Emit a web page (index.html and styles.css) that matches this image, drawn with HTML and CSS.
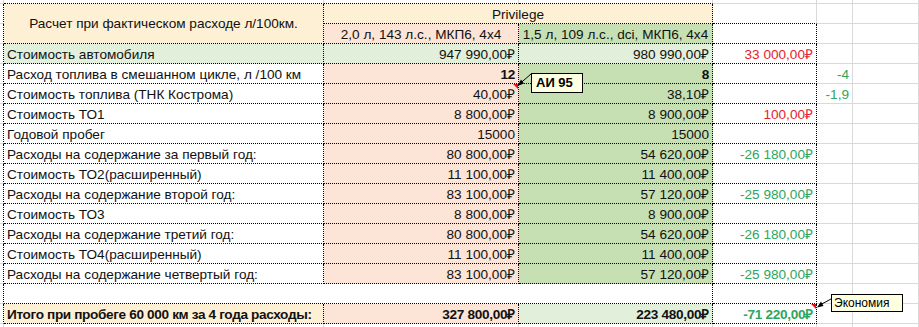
FILE: index.html
```html
<!DOCTYPE html>
<html lang="ru">
<head>
    <meta charset="UTF-8">
    <title>Расчет при фактическом расходе</title>
    <link rel="stylesheet" href="styles.css">
</head>
<body>
    <div class="sheet-wrap">
        <table class="sheet">
            <colgroup>
                <col class="c0"><col class="ca"><col class="cb"><col class="cc"><col class="cd"><col class="ce"><col class="cf">
            </colgroup>
            <tr class="top">
                <td></td><td class="db"></td><td class="db"></td><td class="db"></td><td></td><td></td><td></td>
            </tr>
            <tr>
                <td class="dr s"></td>
                <td class="d cream mid head" rowspan="2">Расчет при фактическом расходе л/100км.</td>
                <td class="d cream mid" colspan="2">Privilege</td>
                <td class="db"></td><td></td><td></td>
            </tr>
            <tr>
                <td class="dr s"></td>
                <td class="d pink mid">2,0 л, 143 л.с., МКП6, 4х4</td>
                <td class="d green mid">1,5 л, 109 л.с., dci, МКП6, 4х4</td>
                <td class="d"></td><td></td><td></td>
            </tr>
            <tr>
                <td class="dr s"></td>
                <td class="d lgreen">Стоимость автомобиля</td>
                <td class="d lgreen num">947 990,00₽</td>
                <td class="d lgreen num">980 990,00₽</td>
                <td class="d num red">33 000,00₽</td><td></td><td></td>
            </tr>
            <tr>
                <td class="dr s"></td>
                <td class="d">Расход топлива в смешанном цикле, л /100 км</td>
                <td class="d pink num b">12</td>
                <td class="d green num b">8</td>
                <td class="d"></td><td class="num grn">-4</td><td></td>
            </tr>
            <tr>
                <td class="dr s"></td>
                <td class="d">Стоимость топлива (ТНК Кострома)</td>
                <td class="d pink num">40,00₽</td>
                <td class="d green num">38,10₽</td>
                <td class="d"></td><td class="num grn">-1,9</td><td></td>
            </tr>
            <tr>
                <td class="dr s"></td>
                <td class="d">Стоимость ТО1</td>
                <td class="d pink num">8 800,00₽</td>
                <td class="d green num">8 900,00₽</td>
                <td class="d num red">100,00₽</td><td></td><td></td>
            </tr>
            <tr>
                <td class="dr s"></td>
                <td class="d">Годовой пробег</td>
                <td class="d pink num">15000</td>
                <td class="d green num">15000</td>
                <td class="d"></td><td></td><td></td>
            </tr>
            <tr>
                <td class="dr s"></td>
                <td class="d">Расходы на содержание за первый год:</td>
                <td class="d pink num">80 800,00₽</td>
                <td class="d green num">54 620,00₽</td>
                <td class="d num grn">-26 180,00₽</td><td></td><td></td>
            </tr>
            <tr>
                <td class="dr s"></td>
                <td class="d">Стоимость ТО2(расширенный)</td>
                <td class="d pink num">11 100,00₽</td>
                <td class="d green num">11 400,00₽</td>
                <td class="d"></td><td></td><td></td>
            </tr>
            <tr>
                <td class="dr s"></td>
                <td class="d">Расходы на содержание второй год:</td>
                <td class="d pink num">83 100,00₽</td>
                <td class="d green num">57 120,00₽</td>
                <td class="d num grn">-25 980,00₽</td><td></td><td></td>
            </tr>
            <tr>
                <td class="dr s"></td>
                <td class="d">Стоимость ТО3</td>
                <td class="d pink num">8 800,00₽</td>
                <td class="d green num">8 900,00₽</td>
                <td class="d"></td><td></td><td></td>
            </tr>
            <tr>
                <td class="dr s"></td>
                <td class="d">Расходы на содержание третий год:</td>
                <td class="d pink num">80 800,00₽</td>
                <td class="d green num">54 620,00₽</td>
                <td class="d num grn">-26 180,00₽</td><td></td><td></td>
            </tr>
            <tr>
                <td class="dr s"></td>
                <td class="d">Стоимость ТО4(расширенный)</td>
                <td class="d pink num">11 100,00₽</td>
                <td class="d green num">11 400,00₽</td>
                <td class="d"></td><td></td><td></td>
            </tr>
            <tr>
                <td class="dr s"></td>
                <td class="d">Расходы на содержание четвертый год:</td>
                <td class="d pink num">83 100,00₽</td>
                <td class="d green num">57 120,00₽</td>
                <td class="d num grn">-25 980,00₽</td><td></td><td></td>
            </tr>
            <tr>
                <td class="dr s"></td>
                <td class="d" colspan="3"></td>
                <td class="d"></td><td></td><td></td>
            </tr>
            <tr>
                <td class="dr s"></td>
                <td class="d cream b total">Итого при пробеге 60 000 км за 4 года расходы:</td>
                <td class="d pink num b">327 800,00₽</td>
                <td class="d lgreen num b">223 480,00₽</td>
                <td class="d num grn b">-71 220,00₽</td><td></td><td></td>
            </tr>
            <tr class="bot">
                <td></td><td></td><td></td><td></td><td></td><td></td><td></td>
            </tr>
        </table>

        <!-- comment on fuel price -->
        <span class="tri tri-fuel"></span>
        <svg class="arrow arrow-fuel" width="16" height="16" viewBox="0 0 16 16">
            <line x1="4" y1="11.5" x2="15" y2="2" stroke="#000" stroke-width="1"/>
            <polygon points="1.5,14 8,11.5 5,7.5" fill="#000"/>
        </svg>
        <div class="note note-fuel">АИ 95</div>

        <!-- comment on total -->
        <span class="tri tri-total"></span>
        <svg class="arrow arrow-total" width="16" height="14" viewBox="0 0 16 14">
            <line x1="4" y1="9" x2="15" y2="3" stroke="#000" stroke-width="1"/>
            <polygon points="1,11.5 7.5,10 5,5.5" fill="#000"/>
        </svg>
        <div class="note note-total">Экономия</div>
    </div>
</body>
</html>
```
FILE: styles.css
```css
body {
    margin: 0;
    background-color: #fff;
    font-family: "Liberation Sans", Arial, sans-serif;
    font-size: 13.6px;
    color: #111;
}
.sheet-wrap {
    position: relative;
    width: 919px;
    height: 327px;
    overflow: hidden;
}
.sheet {
    border-collapse: separate;
    border-spacing: 0;
    table-layout: fixed;
    width: 919px;
}
.c0 { width: 4px; }
.ca { width: 320px; }
.cb { width: 195px; }
.cc { width: 194px; }
.cd { width: 104px; }
.ce { width: 36px; }
.cf { width: 66px; }
.sheet td {
    box-sizing: border-box;
    height: 20px;
    padding: 0 3px;
    border-right: 1px solid #d9d9d9;
    border-bottom: 1px solid #d9d9d9;
    white-space: nowrap;
    overflow: hidden;
    line-height: 17px;
    vertical-align: bottom;
}
.sheet td.s {
    padding: 0;
}
.sheet tr.top td {
    height: 4px;
    padding: 0;
}
.sheet tr.bot td {
    height: 3px;
    padding: 0;
    border-bottom: none;
}
.sheet td.d {
    border-right: 1px dotted #000;
    border-bottom: 1px dotted #000;
}
.sheet td.dr {
    border-right: 1px dotted #000;
}
.sheet td.db {
    border-bottom: 1px dotted #000;
}
.sheet td.head {
    vertical-align: middle;
}
.num { text-align: right; }
.mid { text-align: center; }
.b {
    font-weight: bold;
    letter-spacing: -0.3px;
}
.sheet td.total {
    letter-spacing: -0.35px;
}
.cream { background-color: #fdf0d5; }
.pink { background-color: #fce4d6; }
.green { background-color: #c6e0b4; }
.lgreen { background-color: #e2efda; }
.red { color: #e5232d; }
.grn { color: #2ea55d; }

/* comments */
.tri {
    position: absolute;
    width: 0;
    height: 0;
    border-top: 5px solid #e0121c;
    border-left: 5px solid transparent;
}
.tri-fuel { left: 513px; top: 84px; }
.tri-total { left: 811px; top: 304px; }
.arrow {
    position: absolute;
}
.arrow-fuel { left: 516px; top: 72px; }
.arrow-total { left: 816px; top: 296px; }
.note {
    position: absolute;
    box-sizing: border-box;
    background-color: #ffffe1;
    border: 1px solid #000;
    color: #000;
    white-space: nowrap;
}
.note-fuel {
    left: 531px;
    top: 73px;
    width: 52px;
    height: 20px;
    padding: 0 0 0 4px;
    font-size: 13px;
    font-weight: bold;
    line-height: 18px;
}
.note-total {
    left: 831px;
    top: 294px;
    width: 72px;
    height: 18px;
    padding: 0 0 0 2px;
    font-size: 12px;
    line-height: 16px;
}
```
